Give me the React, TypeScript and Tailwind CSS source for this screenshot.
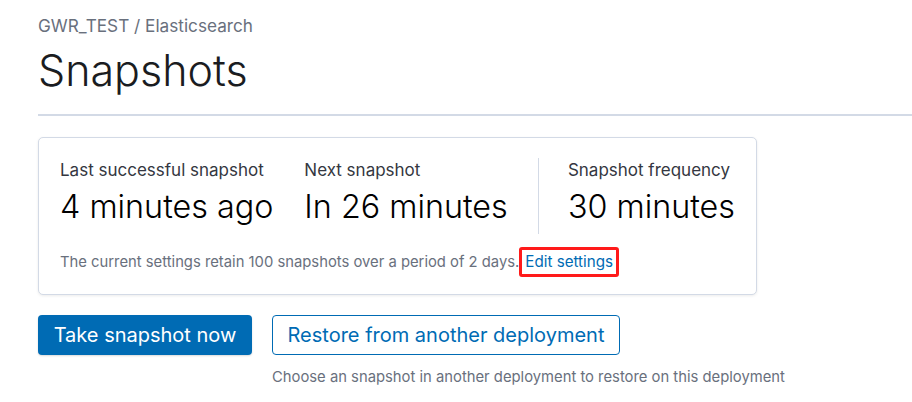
const Stat = ({ label, value }: { label: string; value: string }) => (
  <div className="flex flex-col whitespace-nowrap">
    <span className="text-[17px] leading-6 text-[#343741]">{label}</span>
    <span className="mt-[5px] text-[32.3px] leading-[40px] font-light text-black">{value}</span>
  </div>
);

export default function App() {
  return (
    <div className="min-h-screen w-[912px] bg-white font-['Inter',sans-serif]">
      <div className="pl-[38px] pt-[14px]">
        <div className="text-[17.2px] leading-6 text-[#69707d]">GWR_TEST / Elasticsearch</div>
        <h1 className="mt-[6px] text-[43px] leading-[52px] font-light text-[#1a1c21]">Snapshots</h1>
        <div className="mt-[18px] h-[2px] bg-[#d3dae6]" />

        <div className="mt-[21px] w-[719px] rounded-[5px] border border-[#d3dae6] bg-white px-[21px] pt-[20px] pb-[22px] shadow-[0_1px_3px_rgba(0,0,0,0.08)]">
          <div className="flex items-start">
            <Stat label="Last successful snapshot" value="4 minutes ago" />
            <div className="ml-[31px]">
              <Stat label="Next snapshot" value="In 26 minutes" />
            </div>
            <div className="mx-[30px] h-[76px] w-px bg-[#d3dae6]" />
            <Stat label="Snapshot frequency" value="30 minutes" />
          </div>
          <div className="mt-[18px] flex items-center text-[14.8px] leading-5 text-[#69707d]">
            <span>The current settings retain 100 snapshots over a period of 2 days.</span>
            <a
              href="#"
              className="-my-[6px] rounded-[3px] border-[3px] border-[#ff1a1a] px-[3px] py-[2px] text-[15.2px] text-[#006bb4]"
            >
              Edit settings
            </a>
          </div>
        </div>

        <div className="mt-[20px] flex items-start gap-[20px]">
          <button className="h-10 w-[214px] rounded-[4px] bg-[#006bb4] text-[20px] text-white shadow-[0_1px_2px_rgba(0,0,0,0.15)]">
            Take snapshot now
          </button>
          <div className="flex flex-col">
            <button className="h-10 w-[348px] rounded-[4px] border border-[#006bb4] bg-white text-[20px] text-[#006bb4]">
              Restore from another deployment
            </button>
            <span className="mt-[12px] whitespace-nowrap text-[14.8px] leading-5 text-[#69707d]">
              Choose an snapshot in another deployment to restore on this deployment
            </span>
          </div>
        </div>
      </div>
    </div>
  );
}
